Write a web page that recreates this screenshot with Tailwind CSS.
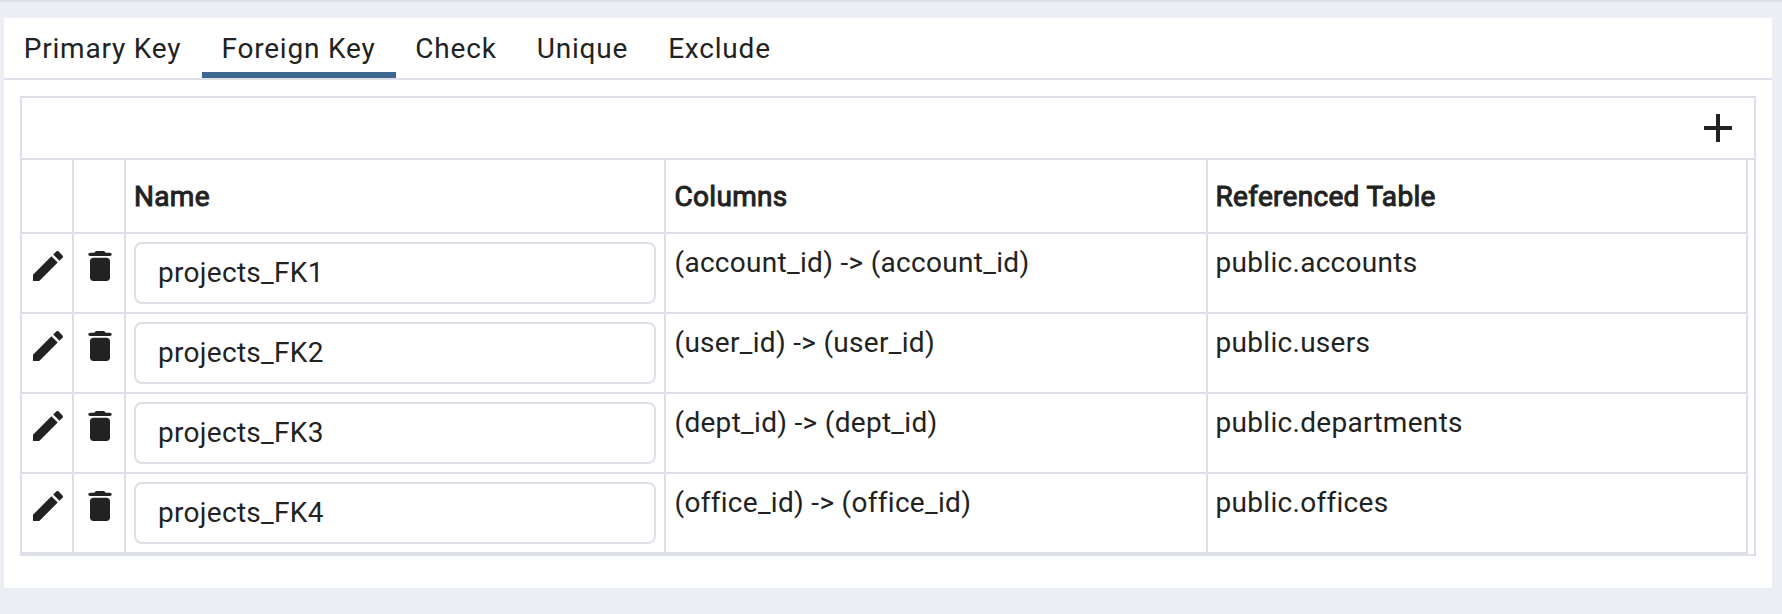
<!DOCTYPE html>
<html lang="en">
<head>
<meta charset="utf-8">
<title>Constraints</title>
<script src="https://cdn.jsdelivr.net/npm/@tailwindcss/browser@4"></script>
</head>
<body class="h-[614px] overflow-hidden border-t-2 border-[#dde0e6] bg-[#ebeef3] pt-4 pl-1 font-['Roboto',sans-serif] text-[28px] leading-10 text-[#222222]">
<svg class="hidden">
  <symbol id="edit" viewBox="0 0 24 24"><path d="M3 17.25V21h3.75L17.81 9.94l-3.75-3.75L3 17.25zM20.71 7.04c.39-.39.39-1.02 0-1.41l-2.34-2.34c-.39-.39-1.02-.39-1.41 0l-1.83 1.83 3.75 3.75 1.83-1.83z"/></symbol>
  <symbol id="trash" viewBox="0 0 24 24"><path d="M6 19c0 1.1.9 2 2 2h8c1.1 0 2-.9 2-2V9c0-1.1-.9-2-2-2H8c-1.1 0-2 .9-2 2v10zM18 4h-2.5l-.71-.71c-.18-.18-.44-.29-.7-.29H9.91c-.26 0-.52.11-.7.29L8.5 4H6c-.55 0-1 .45-1 1s.45 1 1 1h12c.55 0 1-.45 1-1s-.45-1-1-1z"/></symbol>
</svg>
<main class="h-[570px] w-[1768px] bg-white">
  <nav class="flex h-[62px] border-b-2 border-[#dde0e6] tracking-[0.8px]">
    <button class="w-[198px] border-b-6 border-transparent pt-2 pr-px">Primary Key</button>
    <button class="w-[194px] border-b-6 border-[#3d678e] pt-2 pr-px">Foreign Key</button>
    <button class="w-[121px] border-b-6 border-transparent pt-2 pr-px">Check</button>
    <button class="w-[131px] border-b-6 border-transparent pt-2">Unique</button>
    <button class="w-[143px] border-b-6 border-transparent pt-2">Exclude</button>
  </nav>
  <section class="mx-4 mt-4 h-[460px] border-2 border-[#dde0e6] tracking-[0.3px]">
    <div class="flex h-[62px] items-center justify-end border-b-2 border-[#dde0e6] pr-3">
      <svg class="size-12 fill-[#222222]" viewBox="0 0 24 24"><path d="M19 13h-6v6h-2v-6H5v-2h6V5h2v6h6v2z"/></svg>
    </div>
    <div class="grid h-[74px] w-[1726px] grid-cols-[52px_52px_540px_542px_540px] divide-x-2 divide-[#dde0e6] border-r-2 border-b-2 border-[#dde0e6] [-webkit-text-stroke:1px_#222222]">
      <div></div><div></div>
      <div class="flex items-center px-2 pt-0.5">Name</div>
      <div class="flex items-center pt-0.5 pl-[8.5px]">Columns</div>
      <div class="flex items-center pt-0.5 pl-[7.5px]">Referenced Table</div>
    </div>
    <div class="grid h-20 w-[1726px] grid-cols-[52px_52px_540px_542px_540px] divide-x-2 divide-[#dde0e6] border-r-2 border-b-2 border-[#dde0e6]">
      <div class="pt-3 pl-1.5"><svg class="size-10 fill-[#222222]"><use href="#edit"/></svg></div>
      <div class="pt-3 pl-1.5"><svg class="size-10 fill-[#222222]"><use href="#trash"/></svg></div>
      <div class="p-2"><input class="h-[62px] w-full rounded-lg border-2 border-[#dde0e6] px-[22px] pb-0.5" value="projects_FK1"></div>
      <div class="pt-[9px] pl-[8.5px]">(account_id) -&gt; (account_id)</div>
      <div class="pt-[9px] pl-[7.5px]">public.accounts</div>
    </div>
    <div class="grid h-20 w-[1726px] grid-cols-[52px_52px_540px_542px_540px] divide-x-2 divide-[#dde0e6] border-r-2 border-b-2 border-[#dde0e6]">
      <div class="pt-3 pl-1.5"><svg class="size-10 fill-[#222222]"><use href="#edit"/></svg></div>
      <div class="pt-3 pl-1.5"><svg class="size-10 fill-[#222222]"><use href="#trash"/></svg></div>
      <div class="p-2"><input class="h-[62px] w-full rounded-lg border-2 border-[#dde0e6] px-[22px] pb-0.5" value="projects_FK2"></div>
      <div class="pt-[9px] pl-[8.5px]">(user_id) -&gt; (user_id)</div>
      <div class="pt-[9px] pl-[7.5px]">public.users</div>
    </div>
    <div class="grid h-20 w-[1726px] grid-cols-[52px_52px_540px_542px_540px] divide-x-2 divide-[#dde0e6] border-r-2 border-b-2 border-[#dde0e6]">
      <div class="pt-3 pl-1.5"><svg class="size-10 fill-[#222222]"><use href="#edit"/></svg></div>
      <div class="pt-3 pl-1.5"><svg class="size-10 fill-[#222222]"><use href="#trash"/></svg></div>
      <div class="p-2"><input class="h-[62px] w-full rounded-lg border-2 border-[#dde0e6] px-[22px] pb-0.5" value="projects_FK3"></div>
      <div class="pt-[9px] pl-[8.5px]">(dept_id) -&gt; (dept_id)</div>
      <div class="pt-[9px] pl-[7.5px]">public.departments</div>
    </div>
    <div class="grid h-20 w-[1726px] grid-cols-[52px_52px_540px_542px_540px] divide-x-2 divide-[#dde0e6] border-r-2 border-b-2 border-[#dde0e6]">
      <div class="pt-3 pl-1.5"><svg class="size-10 fill-[#222222]"><use href="#edit"/></svg></div>
      <div class="pt-3 pl-1.5"><svg class="size-10 fill-[#222222]"><use href="#trash"/></svg></div>
      <div class="p-2"><input class="h-[62px] w-full rounded-lg border-2 border-[#dde0e6] px-[22px] pb-0.5" value="projects_FK4"></div>
      <div class="pt-[9px] pl-[8.5px]">(office_id) -&gt; (office_id)</div>
      <div class="pt-[9px] pl-[7.5px]">public.offices</div>
    </div>
  </section>
</main>
</body>
</html>
